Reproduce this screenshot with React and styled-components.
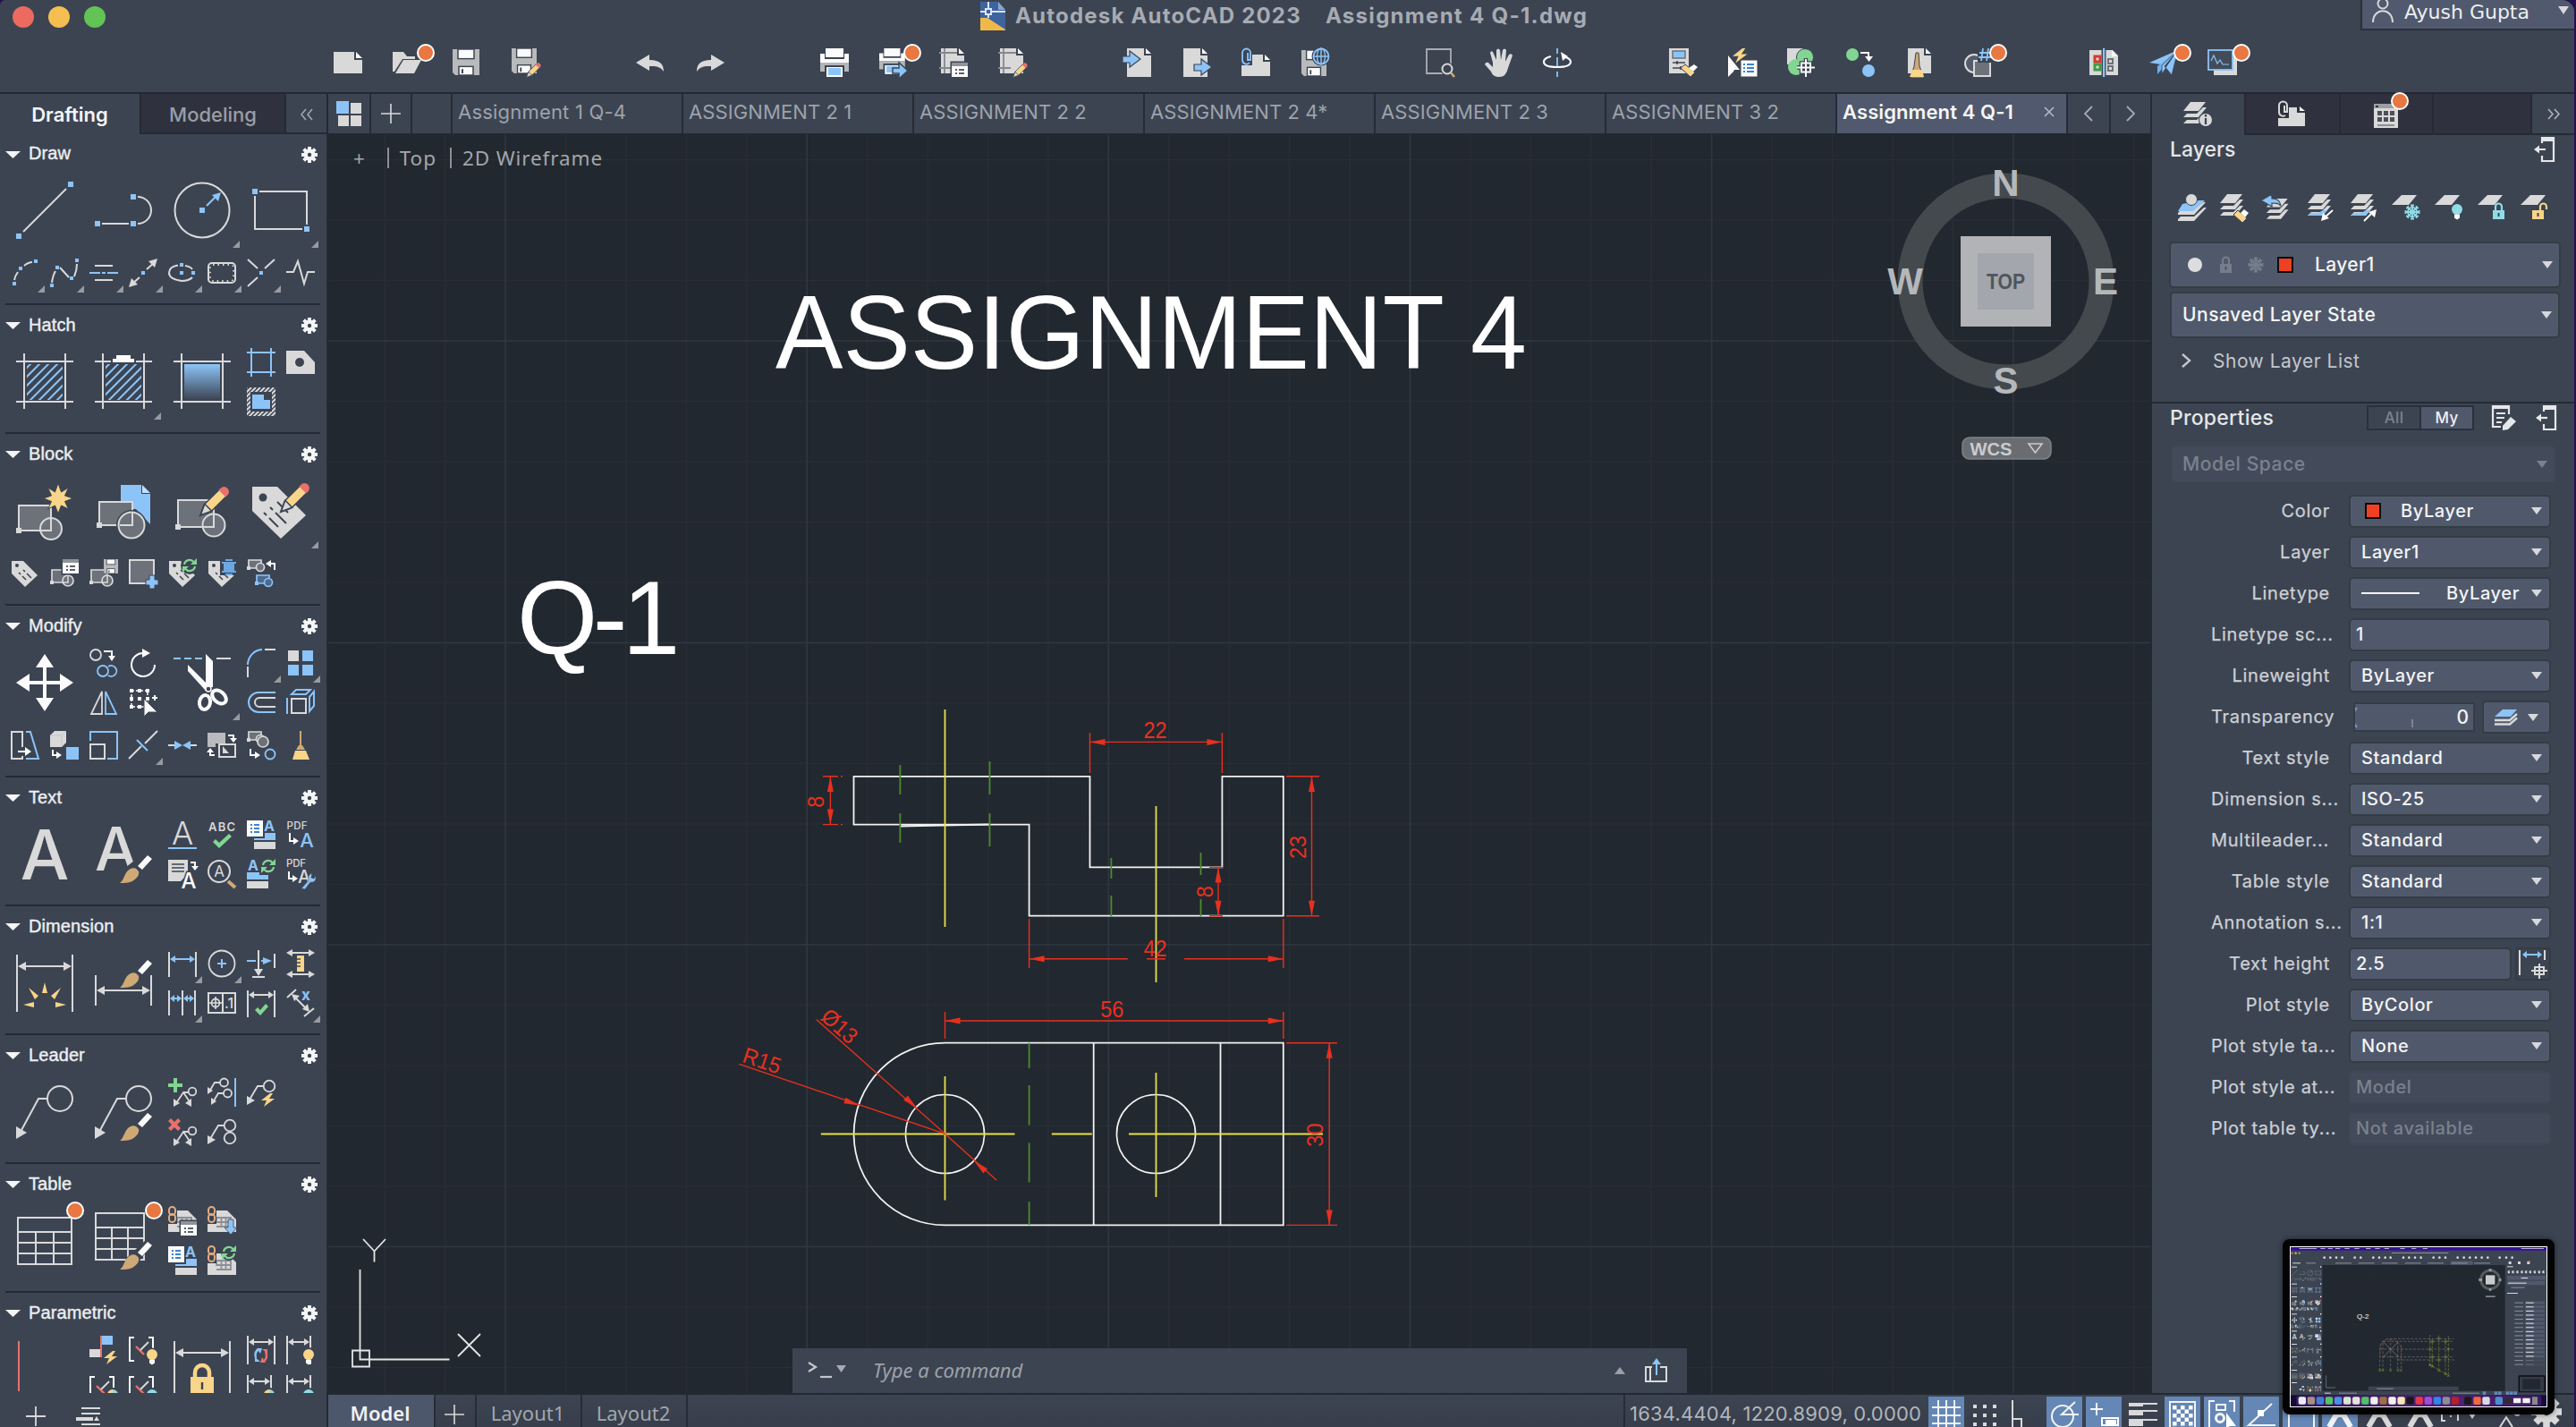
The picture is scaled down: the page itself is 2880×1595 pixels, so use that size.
import React from "react";
import styled, { createGlobalStyle, css } from "styled-components";

const G = "#d9d9d9", B = "#8cc4f8", Y = "#f8d588", R = "#e8716d", N = "#82d692", T = "#8fdce6", M = "#6c717a", W = "#fbfbfb", K = "#3c4452", O = "#e87741", BR = "#cfa975";
const UI = `Inter, "Liberation Sans", sans-serif`;
const HUM = `"Noto Sans", "Open Sans", sans-serif`;
const ART = `"Liberation Sans", Arial, sans-serif`;

const Global = createGlobalStyle`
  html, body { margin: 0; padding: 0; background: #26104f; overflow: hidden; }
  *, *::before, *::after { box-sizing: border-box; }
  svg { display: block; flex: none; overflow: visible; }
`;

/* ---------- shared drawing parts ---------- */
const Sq = ({ x, y, s = 3, c = B }) => <rect x={x - s} y={y - s} width={s * 2} height={s * 2} fill={c} />;
const L = ({ d, c = G, w = 2, f = "none", ...p }) => <path d={d} stroke={c} strokeWidth={w} fill={f} {...p} />;
const P = ({ d, c = G, ...p }) => <path d={d} fill={c} {...p} />;
const Tx = ({ x, y, s, c = G, w = 500, children, ...p }) => <text x={x} y={y} fontSize={s} fill={c} fontWeight={w} fontFamily={UI} textAnchor="middle" {...p}>{children}</text>;
const Pencil = ({ x, y, k = 1 }) => (
  <g transform={`translate(${x} ${y}) scale(${k}) rotate(45)`}>
    <path d="M-5.500 -36h11v26L0 2l-5.500-12z" fill={Y} stroke={K} strokeWidth="1.500" />
    <path d="M-5.500 -33v-3a5.500 5.500 0 0 1 11 0v3z" fill={R} />
    <path d="M-5.500 -11h11L0 1z" fill={G} stroke={K} strokeWidth="1.500" />
  </g>
);
const Brush = ({ x, y }) => (
  <g transform={`translate(${x} ${y})`}>
    <path d="M0 31C5 28 5 18 12 15c4-2 7 0 9 3 1 4-2 8-7 11-5 2-9 2-14 2z" fill={BR} />
    <path d="M20 12L31 0l5 4-11 12z" fill={W} />
  </g>
);
const Doc = ({ x, y, w, h, c = G, n = 7 }) => (
  <g transform={`translate(${x} ${y})`}>
    <path d={`M0 0H${w - n - 1}V${n + 1}H${w}V${h}H0z`} fill={c} />
    <path d={`M${w - n + 1} 0V${n - 1}H${w}z`} fill={W} />
  </g>
);
const Refresh = ({ x, y, r = 6, a = N, b = N, w = 2.2 }) => (
  <g transform={`translate(${x} ${y})`}>
    <path d={`M${-r} -1A${r} ${r} 0 0 1 ${r * 0.8} ${-r * 0.6}`} stroke={a} strokeWidth={w} fill="none" />
    <path d={`M${r} 1A${r} ${r} 0 0 1 ${-r * 0.8} ${r * 0.6}`} stroke={b} strokeWidth={w} fill="none" />
    <path d={`M${r + 2} ${-r - 2}v7h-7z`} fill={a} />
    <path d={`M${-r - 2} ${r + 2}v-7h7z`} fill={b} />
  </g>
);
const Bolt = ({ x, y, k = 1 }) => <path transform={`translate(${x} ${y}) scale(${k})`} d="M10 0L0 8h6l-3 7 12-9H9l4-6z" fill={Y} />;
const Bulb = ({ x, y, c = Y }) => (
  <g transform={`translate(${x} ${y})`}><circle r="6" fill={c} /><path d="M-3 5.500h6v4l-3 2-3-2z" fill={W} /></g>
);
const TagShape = () => (
  <g>
    <path d="M1 2h13l16 16-14 13L1 16z" fill={G} />
    <circle cx="7" cy="7" r="2" fill={K} />
    <path d="M9 15l2 2m2 2l4 4M14 12l2 2m2 2l5 5" stroke={K} strokeWidth="1.600" />
  </g>
);
const MiniBlock = ({ x = 0, y = 0, c = G, f = M }) => (
  <g transform={`translate(${x} ${y})`}>
    <path d="M2 2h18v14H2z" fill={f} stroke={c} strokeWidth="1.700" />
    <circle cx="20" cy="14" r="6" fill={f} stroke={c} strokeWidth="1.700" />
    <path d="M20 8v8h-6" stroke={c} strokeWidth="1.500" fill="none" />
    <rect x="0" y="14" width="4" height="4" fill={c} />
  </g>
);
const SmallBlock = ({ x = 0, y = 0, c = G, f = M }) => (
  <g transform={`translate(${x} ${y})`}>
    <path d="M2 1h14v9H2z" fill={f} stroke={c} strokeWidth="1.700" />
    <circle cx="15" cy="9" r="4.500" fill={f} stroke={c} strokeWidth="1.700" />
    <rect x="0" y="8" width="4" height="4" fill={c} />
  </g>
);
const ListCard = ({ x = 0, y = 0, s = 18 }) => (
  <g transform={`translate(${x} ${y})`}>
    <rect width={s} height={s} fill={W} />
    <path d="M4 5h2m2 0h6M4 9h2m2 0h6M4 13h2m2 0h6" stroke="#3c83c9" strokeWidth="2" />
  </g>
);
const PropCard = ({ x, y }) => (
  <g transform={`translate(${x} ${y})`}>
    <rect x="-1.500" y="-1.500" width="21" height="19" fill={K} />
    <rect width="18" height="16" fill={W} /><rect width="18" height="4" fill="#8f9297" />
    <path d="M4 8h2m2 0h6M4 12h2m2 0h6" stroke="#5b6068" strokeWidth="2" />
  </g>
);
const Floppy = ({ x = 0, y = 0, w = 30, h = 30 }) => (
  <g transform={`translate(${x} ${y}) scale(${w / 30} ${h / 30})`}>
    <path d="M0 0h30v30H3l-3-3z" fill="#b9babc" />
    <rect x="6" y="0" width="18" height="11" fill={W} stroke={K} strokeWidth="1.500" />
    <rect x="7" y="20" width="16" height="10" fill={W} stroke={K} strokeWidth="1.500" />
    <path d="M11 23v5" stroke={K} strokeWidth="2" />
  </g>
);
const AStyle = ({ x = 0, y = 0 }) => (
  <g transform={`translate(${x} ${y})`}>
    <ListCard /><Tx x={25} y={12} s={16} c={B} w={700}>A</Tx>
    <rect x="20" y="14" width="12" height="8" fill={B} /><rect x="8" y="20" width="24" height="2" fill={B} />
    <rect x="8" y="24" width="24" height="8" fill={G} />
  </g>
);
const Printer = () => (
  <g>
    <rect x="6" y="0" width="20" height="10" fill={W} /><path d="M0 6h5v6h22V6h5v10H0z" fill={W} />
    <path d="M0 16h32v10h-5v-7H5v7H0z" fill="#b5b6b9" /><rect x="7" y="21" width="18" height="11" fill={W} /><rect x="9" y="22" width="14" height="8" fill={B} />
  </g>
);
const Sheets = () => <path d="M10 1h17l-8 10H2zM6 14l-4 4h17l9-11h-4l-7 7zM6 21l-4 4h17l9-11h-4l-7 7z" fill={G} />;
const LockShape = ({ x = 0, y = 0, c = T, open }) => (
  <g transform={`translate(${x} ${y})`}>
    <rect y="8" width="13" height="10" fill={c} />
    <path d={open ? "M9 9V4a3.500 3.500 0 0 1 7 0v3" : "M3 9V4a3.500 3.500 0 0 1 7 0v5"} stroke={c} strokeWidth="2.200" fill="none" />
    <path d="M6.500 11v4" stroke={K} strokeWidth="2" />
  </g>
);
const Snow = ({ x = 0, y = 0, c = T, r = 8.5 }) => (
  <g transform={`translate(${x} ${y})`} stroke={c} strokeWidth="1.800" fill="none">
    <circle r={r * 0.6} />
    {[0, 45, 90, 135].map(a => <path key={a} d={`M${-r} 0h${2 * r}M${-r + 1} -2v4M${r - 1} -2v4`} transform={`rotate(${a})`} />)}
  </g>
);
const Frame = () => <L d="M9 0v62M55 0v62M0 9h64M0 54h64" />;
const Hatching = () => (
  <g>
    <clipPath id="hatchClip"><rect x="12" y="12" width="40" height="40" /></clipPath>
    <g clipPath="url(#hatchClip)">{[0, 10, 20, 30, 40, 50, 60, 70].map(i => <path key={i} d={`M${-26 + i} 54l44-44`} stroke={B} strokeWidth="2" />)}</g>
  </g>
);
const Mleader = ({ x = 0, y = 0, r = 5 }) => (
  <g transform={`translate(${x} ${y})`} stroke={G} strokeWidth="1.800" fill="none"><path d="M2 13L8 3h6" /><circle cx={14 + r} cy="3" r={r} /><path d="M0 16v-8l6 4z" fill={G} stroke="none" /></g>
);
const AddLeader = () => (
  <g><L d="M9 28L17 16l8 12M17 16h5" w={1.8} /><circle cx="27" cy="15" r="4.300" stroke={G} strokeWidth="1.800" fill="none" /><P d="M6 32v-9l7 5z" /><P d="M26 32v-9l-7 5z" /></g>
);
const GeoBracket = () => (
  <g><L d="M6 2H1v26h5" c={W} /><L d="M22 2h5v12" c={W} /><L d="M8 12l9 9" c={R} w={2.4} /><L d="M13 16l9-9" /></g>
);
const DimBracket = ({ w = 26 }) => (
  <g><L d={`M1 0v32M${w + 1} 0v32`} /><L d={`M4 7h${w - 6}`} /><P d={`M2 7l6-4v8zM${w} 7l-6-4v8z`} /></g>
);
const Chain = ({ x = 0, y = 0 }) => (
  <g transform={`translate(${x} ${y})`} stroke="#e2ab80" strokeWidth="2" fill="none"><rect x="1" y="0" width="7" height="9" rx="3.500" /><rect x="1" y="8" width="7" height="9" rx="3.500" /></g>
);
const SheetGrid = () => (<g><path d="M0 11h10V4h12l10 10v14H0z" fill={G} /><path d="M10 12h16v5H10zM15.500 12v10M20.500 12v10M10 22h16v-5" stroke="#8c8f94" strokeWidth="1.800" fill="none" /></g>);

/* ---------- palette drawings ---------- */
const ICONS = {
  line: <g><L d="M8 56L56 8" /><Sq x={3} y={61} /><Sq x={61} y={3} /></g>,
  polyline: <g><L d="M8 47h30M48 17a15 15 0 0 1 0 30" /><Sq x={3} y={47} /><Sq x={43} y={47} /><Sq x={43} y={17} /></g>,
  circle: <g><circle cx="32" cy="32" r="30.500" stroke={G} strokeWidth="2" fill="none" /><Sq x={32} y={32} /><L d="M37 27l10-10" c={B} w={2.2} /><P d="M53 12l-3 10-7-7z" c={B} /></g>,
  rect: <g><L d="M8 11h53v37M3 16v37h53" /><Sq x={3} y={11} /><Sq x={61} y={53} /></g>,
  arc: <g><L d="M4 24q1-5 4-9M15 8q5-4 9-4" /><Sq x={4} y={28} s={2} /><Sq x={11} y={11} s={2} /><Sq x={28} y={3} s={2} /></g>,
  spline: <g><L d="M2 27q1-8 4-13M11 10l10 11M27 20q3-7 3-14" /><Sq x={2} y={30} s={2} /><Sq x={8} y={10} s={2} /><Sq x={24} y={22} s={2} /><Sq x={30} y={2} s={2} /></g>,
  mline: <g><L d="M6 8h20M6 24h20" /><L d="M0 16h12m2 0h4m2 0h12" c={B} /></g>,
  xline: <g><L d="M3 29l9-8M20 12l9-8" /><P d="M32 0l-3 10-7-7zM0 32l3-10 7 7z" /><Sq x={16} y={16} s={2} /></g>,
  ellipse: <g><L d="M11 7.500Q1 9 1 16t14 9q8 0 12-4M19 8q6 1 8 4" /><Sq x={15} y={7} s={2} /><Sq x={15} y={16} s={2} /><Sq x={28} y={16} s={2} /></g>,
  cloud: <g><rect x="1" y="5" width="30" height="22" rx="4" stroke={G} strokeWidth="2" fill="none" /><rect x="3" y="7" width="26" height="18" rx="3" stroke={G} strokeWidth="1.800" strokeDasharray="1.500 4" fill="none" /></g>,
  xpoint: <g><L d="M1 1l11 10M20 11L31 1M1 31l11-10" /><Sq x={16} y={16} s={2} /></g>,
  pulse: <L d="M0 15h8l5-12 7 25 4-13h8" />,

  hatch: <g><Frame /><Hatching /></g>,
  hatchPaste: <g><Frame /><rect x="18" y="0" width="28" height="11" fill={K} /><Hatching /><path d="M24 2h16v4h4v4H20V6h4z" fill={W} /></g>,
  gradient: <g><defs><linearGradient id="fade" x1="0" y1="0" x2="0" y2="1"><stop offset="0" stopColor={B} /><stop offset="1" stopColor={K} /></linearGradient></defs><Frame /><rect x="12" y="12" width="40" height="40" fill="url(#fade)" /></g>,
  boundary: <L d="M5 0v32M27 0v32M0 5h32M0 27h32" c={B} />,
  wipeout: <g><P d="M0 3h20l12 13v13H0z" /><circle cx="15" cy="16" r="5" fill={K} /></g>,
  region: <g><clipPath id="rc"><path d="M0 0h32v32H0z" /></clipPath><g clipPath="url(#rc)">{Array.from({ length: 14 }, (_, i) => <path key={i} d={`M${i * 5 - 34} 34L${i * 5} 0`} stroke={G} strokeWidth="2" />)}</g><rect x="4" y="5" width="24" height="22" fill={K} /><path d="M6 8h13v6h7v10H6z" fill={B} /></g>,

  blockNew: <g><path d="M3 26h36v28H3z" fill={M} stroke={G} strokeWidth="2" /><circle cx="39" cy="52" r="12" fill={M} stroke={G} strokeWidth="2" /><L d="M39 40v14H28" /><Sq x={3} y={54} c={G} /><path d="M47 1l3.500 10 8-5-4 9 9 3-9 3.500 4 8.500-8-4-3.500 9-3.500-9-8 4 4-8.500-9-3.500 9-3-4-9 8 5z" fill={Y} stroke={K} strokeWidth="1" /></g>,
  blockInsert: <g><path d="M29 3h23v10h10v34L46 30H29z" fill={B} /><path d="M53 3v9h9z" fill="#c4e0fa" /><path d="M5 22h37v26H5z" fill={M} stroke={G} strokeWidth="2" /><circle cx="41" cy="48" r="17" fill={K} /><circle cx="41" cy="48" r="14.500" fill={M} stroke={G} strokeWidth="2" /><L d="M42 33v15H28" /><Sq x={5} y={48} c={G} /></g>,
  blockEdit: <g><path d="M5 20h40v30H5z" fill={M} stroke={G} strokeWidth="2" /><circle cx="45" cy="48" r="12.500" fill={M} stroke={G} strokeWidth="2" /><L d="M45 36v14H33" /><Sq x={5} y={50} c={G} /><Pencil x={31} y={36} /></g>,
  tagEdit: <g><P d="M0 5h28l32 32-28 26L0 32z" /><circle cx="12" cy="17" r="4.500" fill={K} /><L d="M13 34l3 3m3 3l10 10M20 28l3 3m3 3l12 12M28 22l12 12" c={K} /><Pencil x={33} y={32} /></g>,
  tag: <TagShape />,
  blockProps: <g><MiniBlock y={10} /><PropCard x={14} y={0} /></g>,
  blockSave: <g><MiniBlock y={10} /><Floppy x={16} y={0} w={16} h={16} /></g>,
  rectPlus: <g><path d="M1 1h27v26H1z" fill={M} stroke={G} strokeWidth="2" /><path d="M23 18h6v5h4v6h-4v4h-6v-4h-4v-6h4z" fill={B} stroke={K} strokeWidth="1" /></g>,
  tagSync: <g><TagShape /><circle cx="24" cy="7" r="10" fill={K} /><Refresh x={24} y={7} /></g>,
  tagAttr: <g><TagShape /><rect x="14" y="0" width="18" height="18" fill={K} /><rect x="18" y="3" width="12" height="12" fill="#6ea8e0" /><path d="M16 4h2m12 0h2M16 14h2m12 0h2M20 1h8M20 17h8" stroke="#6ea8e0" strokeWidth="2" /></g>,
  blockSwap: <g><SmallBlock y={0} /><L d="M31 12V5h-5" c={W} /><P d="M21 5l6-4v8z" c={W} /><SmallBlock x={9} y={17} c={B} f="#4d6a8c" /></g>,

  move: <path d="M32 0l10 15h-8v15h15v-8l15 10-15 10v-8H34v15h8L32 64 22 49h8V34H15v8L0 32l15-10v8h15V15h-8z" fill={W} />,
  copy: <g><circle cx="7" cy="7" r="6" stroke={G} strokeWidth="1.800" fill="none" /><L d="M16 3h9v7" c={W} /><P d="M21 8h8l-4 6z" c={W} /><circle cx="15" cy="25" r="6" stroke={B} strokeWidth="1.800" fill="none" /><L d="M21 20a6 6 0 1 1 0 10" c={B} w={1.8} /></g>,
  rotate: <g><L d="M17 5a13 13 0 1 0 12 13" c={W} /><P d="M15 0v10l9-5z" c={W} /></g>,
  mirror: <g><L d="M14 4v25H2z" w={1.8} /><L d="M18 4v25h12z" c={B} w={1.8} /></g>,
  select: <g><rect x="3" y="3" width="18" height="18" stroke={W} strokeWidth="1.500" strokeDasharray="3 2" fill="none" />{[3, 12, 21].flatMap(a => [3, 12, 21].map(b => <Sq key={a + "-" + b} x={a} y={b} s={2} c={W} />))}<path d="M17 12v20l5-5h10z" fill={W} stroke={K} strokeWidth="1" /><L d="M29 8v6M26 11h6" c={W} /></g>,
  trim: <g><L d="M0 5h8m4 0h8m4 0h8" c={B} /><L d="M48 5h16" /><path d="M36 0l8 8v29h-8z" fill={W} /><path d="M16 12l24 24-4 5-20-22z" fill={W} /><ellipse cx="35" cy="54" rx="6" ry="8" stroke={W} strokeWidth="4" fill="none" transform="rotate(10 35 54)" /><ellipse cx="51" cy="48" rx="6" ry="9" stroke={W} strokeWidth="4" fill="none" transform="rotate(-48 51 48)" /><circle cx="39" cy="39" r="3" fill={K} stroke={W} strokeWidth="1.500" /></g>,
  fillet: <g><L d="M1 18A17 17 0 0 1 17 1" c={B} /><L d="M20 1h12M1 20v12" /></g>,
  array: <g><rect x="2" y="2" width="12" height="12" fill={G} /><rect x="18" y="2" width="12" height="12" fill={B} /><rect x="2" y="18" width="12" height="12" fill={B} /><rect x="18" y="18" width="12" height="12" fill={B} /></g>,
  offset: <g><L d="M32 5H13a11 11 0 0 0 0 22h19" c={B} /><L d="M32 11H14a5 5 0 0 0 0 10h18" /></g>,
  box: <g><path d="M6 12h16v16H6z" stroke={G} strokeWidth="2" fill="none" /><L d="M1 11v18M6 7l5-5h16l-5 5zM26 10l5-6v16l-5 6z" c={B} /></g>,
  stretch: <g><path d="M1 1h12v30H1z" stroke={G} strokeWidth="2" fill="none" /><L d="M17 1h5l9 30H17" c={B} /><rect x="11" y="18" width="8" height="10" fill={K} /><L d="M8 23h10" c={W} /><P d="M16 18v10l7-5z" c={W} /></g>,
  flatten: <g><P d="M0 5l5-5h13v13l-5 5H0z" /><L d="M0 5h13l5-5M13 5v13" c="#c0c1c4" w={0.8} /><rect x="18" y="18" width="14" height="14" fill={B} /><L d="M3 21v6h5" c={W} /><P d="M7 23v8l6-4z" c={W} /></g>,
  scale: <g><path d="M1 15h16v16H1z" stroke={G} strokeWidth="2" fill="none" /><L d="M1 11V1h30v30H20" c={B} /></g>,
  breakAt: <g><L d="M0 31L14 17M18 14L32 0" /><L d="M9 10l12 12" c={B} /></g>,
  join: <g><L d="M0 16h8M24 16h8" /><P d="M7 11l9 5-9 5zM25 11l-9 5 9 5z" c={B} /></g>,
  draworder: <g><P d="M0 2h20v12H9v4H0z" c="#b9babd" /><path d="M13 15h18v14H13z" stroke={G} strokeWidth="2" fill="none" /><P d="M17 17l7 8h-7z" /><L d="M23 5h6v4M8 27H3v-4" c={W} /><P d="M25 8h8l-4 5zM-1 24h8l-4-5z" c={W} /></g>,
  explode: <g><SmallBlock y={0} x={0} /><circle cx="18" cy="12" r="6" fill={M} stroke={G} strokeWidth="1.700" /><circle cx="26" cy="26" r="5.500" stroke={B} strokeWidth="1.800" fill="none" /><L d="M4 20v7h6" c={W} /><P d="M9 23v8l6-4z" c={W} /></g>,
  broom: <g><L d="M16 0v18" c={BR} /><P d="M14 16h4l3 5H11z" c={BR} /><P d="M10 22h12l4 10H7z" c={Y} /></g>,

  mtext: <Tx x={32} y={60} s={77} w={500}>A</Tx>,
  textStyle: <g><Tx x={24} y={50} s={68} w={500}>A</Tx><path d="M30 50L58 28l8 4-34 26z" fill={K} /><Brush x={28} y={33} /></g>,
  stext: <g><Tx x={16} y={27} s={36} w={300}>A</Tx><rect x="0" y="30" width="32" height="2" fill={B} /></g>,
  spell: <g><Tx x={16} y={12} s={13} w={600} textLength="30">ABC</Tx><path d="M6 24l3-3 4 4L24 15l3 3-14 13z" fill={N} /></g>,
  astyle: <AStyle />,
  pdfA: <g><Tx x={12} y={10} s={11.5} w={500} textLength="23">PDF</Tx><L d="M4 14v9h6" c={W} /><P d="M8 19v8l6-4z" c={W} /><Tx x={23} y={30} s={22} c={B} w={500}>A</Tx></g>,
  textBlock: <g><P d="M0 0h22v16l-8 8H0z" /><L d="M4 5h14M4 9h14M4 13h14" c={K} w={1.6} /><L d="M25 3h5v5" c={W} /><P d="M26 7h8l-4 5z" c={W} /><Tx x={23} y={32} s={24} w={500} stroke={K} strokeWidth="3" paintOrder="stroke" c={W}>A</Tx></g>,
  findText: <g><circle cx="13" cy="13" r="12" stroke={G} strokeWidth="2" fill="none" /><Tx x={13} y={19} s={17} w={400}>A</Tx><L d="M23 24l8 7" c={BR} w={4} /></g>,
  scaleText: <g><Tx x={7} y={12} s={16} c={B} w={700}>A</Tx><path d="M0 14h14v3h10v5H0z" fill={B} /><rect y="24" width="24" height="8" fill={G} /><Refresh x={24} y={7} r={6} /></g>,
  pdfFix: <g><Tx x={11} y={8} s={11.5} w={500} textLength="22">PDF</Tx><L d="M3 13v8h5" c={W} /><P d="M7 17v8l6-4z" c={W} /><Tx x={20} y={26} s={20} w={500}>A</Tx><path d="M17 32l8-9c-1-5 1-7 4-8l-1 5 3 1 2-3c1 5-2 8-6 7l-6 8z" fill={B} stroke={K} strokeWidth=".6" /></g>,

  dim: <g><L d="M1 0v64M63 0v64M6 13h52" /><P d="M2 13l9-5v10zM62 13l-9-5v10z" /><path d="M32 31l3 12h-6zM14 37l11 9-4 4zM50 37L39 46l4 4zM8 56l12-3v6zM56 56l-12-3v6z" fill={Y} /></g>,
  dimStyle: <g><L d="M1 23v34M63 23v34M6 40h52" /><P d="M2 40l9-5v10zM62 40l-9-5v10z" /><Brush x={28} y={6} /></g>,
  dimLin: <g><L d="M1 3v28M31 3v28" /><L d="M5 11h22" c={B} /><P d="M2 11l6-4v8zM30 11l-6-4v8z" c={B} /></g>,
  dimCenter: <g><circle cx="16" cy="16" r="14.500" stroke={G} strokeWidth="1.800" fill="none" /><L d="M16 11v10M11 16h10" c={B} /></g>,
  dimSpace: <g><L d="M0 13h10" c={B} /><L d="M16 13h4" c={B} /><P d="M18 9v8l10-4z" c={B} /><L d="M31 5v16M13 1v22M6 31h14" /><P d="M8 22h10l-5 8z" /></g>,
  dimRuler: <g><L d="M4 4h24M4 28h24" /><P d="M0 4l7-4v8zM32 4l-7-4v8zM0 28l7-4v8zM32 28l-7-4v8z" /><rect x="12" y="7" width="8" height="18" fill={Y} /><L d="M12 11h4M12 15h4M12 19h4" c={K} w={1.4} /></g>,
  dimCont: <g><L d="M1 2v28M16 2v28M30 2v28" /><L d="M4 11h10M18 11h10" c={B} /><P d="M2 11l5-4v8zM15 11l-5-4v8zM17 11l5-4v8zM29 11l-5-4v8z" c={B} /></g>,
  tolerance: <g><rect x="1" y="5" width="30" height="22" stroke={G} strokeWidth="2" fill="none" /><L d="M17 5v22" /><circle cx="9" cy="16" r="4.500" stroke={G} strokeWidth="1.800" fill="none" /><L d="M9 9v14M2 16h14" w={1.6} /><Tx x={24} y={22} s={16} w={500}>.1</Tx></g>,
  dimCheck: <g><L d="M1 2v30M31 2v30M5 7h22" /><P d="M2 7l6-4v8zM30 7l-6-4v8z" /><path d="M9 24l3-3 3 3 6-7 3 3-9 10z" fill={N} /></g>,
  dimJog: <g><L d="M1 10L11 1M20 31l11-9M9 9l14 14" /><P d="M6 6l9 2-6 6zM26 26l-2-9-6 6z" /><Tx x={22} y={13} s={17} c={B} w={700}>x</Tx></g>,

  leader: <g><L d="M5 54L25 17h9" /><circle cx="49" cy="17" r="14" stroke={G} strokeWidth="2" fill="none" /><P d="M0 62V48l12 7z" /></g>,
  leaderStyle: <g><L d="M5 54L25 17h9" /><circle cx="49" cy="17" r="14" stroke={G} strokeWidth="2" fill="none" /><P d="M0 62V48l12 7z" /><Brush x={28} y={33} /></g>,
  leaderAdd: <g><AddLeader /><path d="M6 0h4v6h6v4h-6v6H6v-6H0V6h6z" fill={N} /></g>,
  leaderAlign: <g><Mleader x={0} y={2} r={4.5} /><Mleader x={4} y={14} r={4.5} /><rect x="30" y="0" width="2" height="32" fill={B} /></g>,
  leaderBolt: <g><L d="M3 24L12 9h6" w={1.8} /><circle cx="25" cy="9" r="6.300" stroke={G} strokeWidth="1.800" fill="none" /><P d="M0 30V20l9 5z" /><Bolt x={16} y={17} /></g>,
  leaderDel: <g><AddLeader /><path d="M0 4l3-3 4 4 4-4 3 3-4 4 4 4-3 3-4-4-4 4-3-3 4-4z" fill={R} /></g>,
  leaderMerge: <g><L d="M3 24L12 9h6" w={1.8} /><circle cx="25" cy="9" r="6.300" stroke={G} strokeWidth="1.800" fill="none" /><circle cx="25" cy="23" r="6.300" stroke={G} strokeWidth="1.800" fill="none" /><P d="M0 30V20l9 5z" /></g>,

  table: <g><path d="M2 6h60v52H2zM2 22h60M2 34h60M2 46h60M22 22v36M42 22v36" stroke={G} strokeWidth="2" fill="none" /></g>,
  tableStyle: <g><path d="M1 1h54v52H1zM1 17h54M1 29h54M1 41h54M19 17v36M37 17v36" stroke={G} strokeWidth="2" fill="none" /><path d="M34 52L56 32l8 4-20 26z" fill={K} /><Brush x={28} y={33} /></g>,
  linkProps: <g><SheetGrid /><rect x="-1" y="-1" width="11" height="20" fill={K} /><Chain /><PropCard x={14} y={16} /></g>,
  linkDown: <g><SheetGrid /><rect x="-1" y="-1" width="11" height="20" fill={K} /><Chain /><path d="M23 14h6v9h4l-7 8-7-8h4z" fill={B} stroke={K} strokeWidth=".8" /></g>,
  linkSync: <g><g transform="translate(0 4)"><SheetGrid /></g><rect x="-1" y="-1" width="11" height="20" fill={K} /><circle cx="24" cy="7" r="9" fill={K} /><Chain /><Refresh x={24} y={7} /></g>,

  redLine: <L d="M3 0v56" c={R} />,
  autoConstrain: <g><P d="M0 15h12v9H0z" /><P d="M14 0h12v10H14z" c={B} /><L d="M13 0v24" c={R} /><Bolt x={16} y={17} /></g>,
  geoShow: <g><GeoBracket /><circle cx="26" cy="21" r="7.500" fill={K} /><Bulb x={26} y={21} /></g>,
  geoMix: <g><GeoBracket /><circle cx="26" cy="22" r="8" fill={K} /><path d="M20 22a6 6 0 0 1 6-6v6z" fill={Y} /><path d="M26 16a6 6 0 0 1 6 6h-6z" fill={T} /></g>,
  geoHide: <g><GeoBracket /><circle cx="26" cy="22" r="8" fill={K} /><Bulb x={26} y={22} c={T} /></g>,
  dimLock: <g><L d="M1 0v64M63 0v64M6 13h52" /><P d="M2 13l9-5v10zM62 13l-9-5v10z" /><path d="M19 40h26v24H19z" fill={Y} /><path d="M24 42v-7a8 8 0 0 1 16 0v7" stroke={Y} strokeWidth="4.500" fill="none" /><L d="M32 46v8" c={K} w={2.4} /></g>,
  dimConv: <g><DimBracket w={30} /><L d="M14 15q-6 2-4 10" c={B} w={2.4} /><L d="M18 29q6-3 3-12" c={R} w={2.4} /><P d="M11 14h6l-2 6zM9 24l6 5h-6z" c={B} /><P d="M21 30h-6l2-6zM23 20l-6-5h6z" c={R} /></g>,
  dimShow: <g><DimBracket /><circle cx="25" cy="21" r="8" fill={K} /><Bulb x={25} y={21} /></g>,
  dimMix: <g><DimBracket /><circle cx="25" cy="22" r="8" fill={K} /><path d="M19 22a6 6 0 0 1 6-6v6z" fill={Y} /><path d="M25 16a6 6 0 0 1 6 6h-6z" fill={T} /></g>,
  dimHide: <g><DimBracket /><circle cx="25" cy="22" r="8" fill={K} /><Bulb x={25} y={22} c={T} /></g>,

  /* toolbar */
  new: <Doc x={0} y={4} w={32} h={24} n={8} />,
  open: <g><P d="M0 4h12l4 5h9v3H11L2 26H0z" /><P d="M12 13h20l-8 15H3z" /></g>,
  save: <Floppy x={1} y={1} w={30} h={29} />,
  saveAs: <g><Floppy x={0} y={0} w={28} h={28} /><Pencil x={17} y={32} k={0.5} /></g>,
  undo: <P d="M0 16L15 7v6c12 0 16 5 16 13-4-6-9-6-16-6v5z" />,
  redo: <P d="M32 16L17 7v6C5 13 1 18 1 26c4-6 9-6 16-6v5z" />,
  print: <Printer />,
  batch: <g><g transform="scale(.9)"><Printer /></g><path d="M15 22h7v-6l10 9-10 9v-6h-7z" fill={B} stroke={K} strokeWidth="1.500" /></g>,
  pageSetup: <g><Doc x={2} y={0} w={26} h={28} /><L d="M0 5h20M6 0v28M0 22h14" c="#85898f" w={1.8} /><PropCard x={14} y={16} /></g>,
  pageEdit: <g><Doc x={2} y={0} w={26} h={28} /><L d="M0 5h20M6 0v28M0 22h14" c="#85898f" w={1.8} /><Pencil x={17} y={32} k={0.5} /></g>,
  import: <g><Doc x={5} y={0} w={27} h={32} /><path d="M0 9h8V3l12 9-12 9v-5H0z" fill={B} stroke={K} strokeWidth="1.200" /></g>,
  export: <g><Doc x={1} y={0} w={27} h={32} /><path d="M13 18h8v-6l12 9-12 9v-5h-8z" fill={B} stroke={K} strokeWidth="1.200" /></g>,
  attach: <g><Doc x={0} y={7} w={32} h={24} /><rect x="-1" y="0" width="13" height="19" fill={K} /><L d="M7 5v8h3V5a4.500 4.500 0 0 0-9 0v8a4.500 4.500 0 0 0 8 3" c={B} w={1.8} /></g>,
  web: <g><Floppy x={1} y={2} w={28} h={29} /><circle cx="23" cy="9" r="10.500" fill={K} /><circle cx="23" cy="9" r="8.500" stroke={B} strokeWidth="1.800" fill="none" /><L d="M23 0v18M14 9h18" c={B} w={1.5} /><ellipse cx="23" cy="9" rx="4.500" ry="9" stroke={B} strokeWidth="1.300" fill="none" /></g>,
  zoomWin: <g><path d="M1 1h27v27H1z" stroke="#a9adb3" strokeWidth="1.800" fill="none" /><circle cx="24" cy="23" r="7.500" fill={K} /><circle cx="24" cy="23" r="5.500" stroke={G} strokeWidth="2" fill="none" /><L d="M28 27l4 5" c={BR} w={2.6} /></g>,
  pan: <P d="M9 16L6 5q1-3 3-1l4 9V2q2-3 4 0l1 11 2-11q2-3 4 0l-1 13 4-8q3-2 4 1l-5 14q-2 10-10 10-7 0-9-6L0 18q1-3 4-2l5 5z" />,
  orbit: <g><L d="M15 0v6m0 4v12m0 4v6" c={B} w={1.8} /><L d="M21 9q9 2 9 6 0 6-15 6T0 15q0-4 8-6" c={W} w={2.2} /><P d="M19 4l8 5-6 5z" c={W} /></g>,
  props: <g><path d="M0 0h22v28H0z" fill={G} /><rect x="4" y="3" width="14" height="8" fill={B} stroke={M} strokeWidth="1.500" /><L d="M4 16h14M4 22h10M9 14v4M13 20v4" c={K} w={1.6} /><path d="M13 22l5-4 11 9-5 5z" fill={Y} stroke={K} /><path d="M22 22l6-4 4 3-5 5z" fill={W} /></g>,
  quick: <g><P d="M0 8l13 16H7l-1 2-6 6z" c={W} /><Bolt x={5} y={0} k={1.1} /><rect x="14" y="13" width="19" height="19" fill={W} stroke={K} /><path d="M17 18h2m2 0h8M17 22h2m2 0h8M17 26h2m2 0h8" stroke="#3c83c9" strokeWidth="2" /></g>,
  count: <g><path d="M0 0h18v18H0z" fill={G} /><circle cx="20" cy="10" r="9.500" fill={N} stroke={K} /><circle cx="10" cy="21" r="9" fill={N} /><path d="M21 11v22M11 21.500h21M16 16.500h10v10H16z" stroke={K} strokeWidth="4.500" fill="none" /><path d="M21 12v20M11 21.500h20M16 16.500h10v10H16z" stroke={W} strokeWidth="2" fill="none" /></g>,
  convert: <g><circle cx="7" cy="7" r="7" fill={N} /><circle cx="25" cy="25" r="7" fill={B} /><L d="M16 5h9v6" c={W} /><P d="M21 9h9l-4.500 6z" c={W} /></g>,
  purge: <g><Doc x={2} y={0} w={26} h={28} /><path d="M5 33l4-13 2-15h3l1 15 5 13z" fill={BR} stroke={K} /><path d="M7 24h11l2 8H4z" fill={Y} /></g>,
  geo: <g><circle cx="10" cy="17" r="10" fill="#555c69" stroke={G} strokeWidth="2" /><rect x="10" y="14" width="18" height="17" fill="#6c717a" stroke={G} strokeWidth="2" /><rect x="14" y="-2" width="16" height="18" fill={K} /><L d="M20 0l-2 14M26 0l-2 14M16 5h14M15 10h14" c={B} w={1.8} /></g>,
  compare: <g><rect x="0" y="2" width="32" height="28" fill={G} /><P d="M24 0h9v9z" c={K} /><P d="M25 2l6 7h-6z" c={W} /><rect x="13.500" y="0" width="5" height="32" fill={K} /><rect x="15" y="0" width="2.200" height="32" fill={B} /><rect x="6" y="9" width="6" height="6" stroke="#d6382f" strokeWidth="3" fill="none" /><rect x="6" y="18" width="6" height="6" stroke="#3f9a45" strokeWidth="3" fill="none" /><path d="M21 12h5v5h-5zM21 20h5v5h-5z" stroke={M} strokeWidth="2" fill="none" /></g>,
  share: <g><path d="M0 16L32 2 13 18z" fill={B} /><path d="M32 2L9 29v-9z" fill="#6fb0ef" /><path d="M32 2L14 19l0 9M32 2l-7 28-8-10z" fill={B} stroke={K} strokeWidth=".8" /></g>,
  activity: <g><rect x="6" y="10" width="26" height="20" fill={G} /><rect x="0" y="2" width="27" height="22" fill="#434c5a" stroke={B} strokeWidth="1.800" /><L d="M3 14l3-6 4 9 3-4 3 5h7" c={B} w={1.2} /></g>,

  /* layer tools */
  lyState: <g><path d="M6 12l-5 8h18l12-12h-7z" fill={B} /><path d="M1 22l2-2h15l11-10h3L19 24H1zM1 29l3-3h15l11-10h3L19 31H1z" fill={G} /><circle cx="16" cy="7" r="6.500" fill={G} stroke={K} /></g>,
  lyMatch: <g><g transform="translate(-2 0)"><Sheets /></g><path d="M15 24l5-5 10 9-5 5z" fill={Y} stroke={K} /><path d="M23 22l4-4 5 4-4 5z" fill={W} /></g>,
  lyPrev: <g><g transform="translate(2 5) scale(.95)"><Sheets /></g><path d="M-2 8L10 1v5c7 0 9 3 10 8-3-3-5-3-10-3v4z" fill={B} stroke={K} strokeWidth="1.200" /></g>,
  lyCurrent: <g><Sheets /><P d="M2 25h16l6-6h-5l-5 3H6z" c={B} /><L d="M30 18L21 27" c={K} w={5} /><L d="M30 19l-9 8" c={W} /><P d="M17 31l2-9 7 6z" c={W} /></g>,
  lyMove: <g><Sheets /><P d="M2 25h16l6-6h-5l-5 3H6z" c={B} /><L d="M17 31l10-10" c={W} /><P d="M31 18l-2 9-7-6z" c={W} /></g>,
  lyFreeze: <g><P d="M11 2h17l-9 11H0z" /><Snow x={23} y={21} /></g>,
  lyOff: <g><P d="M11 2h17l-9 11H0z" /><circle cx="25" cy="18" r="7.500" fill={K} /><Bulb x={25} y={18} c={T} /></g>,
  lyLock: <g><P d="M11 2h17l-9 11H0z" /><LockShape x={17} y={11} /></g>,
  lyUnlock: <g><P d="M11 2h17l-9 11H0z" /><LockShape x={13} y={11} c={Y} open /></g>,
};
const Icon = ({ n, s = 32 }) => <svg width={s} height={s} viewBox={`0 0 ${s} ${s}`}>{ICONS[n]}</svg>;

/* ---------- frame ---------- */
const Window = styled.div`
  width: 2878px; height: 1595px; display: flex; flex-direction: column; overflow: hidden;
  background: ${K}; font-family: ${UI}; color: #e6e7e9; border-radius: 6px 14px 0 0; position: relative;
`;
const Header = styled.header`height: 105px; flex: none; border-bottom: 2px solid #232932; display: flex; flex-direction: column;`;
const TitleBar = styled.div`height: 37px; display: grid; grid-template-columns: 1096px 1fr 239px;`;
const Lights = styled.div`display: flex; gap: 16px; padding: 7px 0 0 14px;`;
const Light = styled.i`width: 24px; height: 24px; border-radius: 50%; background: ${p => p.$c};`;
const Title = styled.div`
  display: flex; align-items: center; height: 35px; font-weight: 700; font-size: 24px; color: #a7abb2; white-space: pre;
  span + span { margin-left: 27px; } svg { margin-right: 11px; }
`;
const TitleText = styled.span`letter-spacing: ${p => p.$ls}px;`;
const User = styled.div`
  height: 34px; background: #50596d; border: solid #2a303b; border-width: 0 0 2px 2px; display: flex; align-items: center;
  padding: 0 6px 5px 11px; font-family: "DejaVu Sans", ${HUM}; font-size: 22px; line-height: 26px; color: #eceef0;
  svg { margin-top: -4px; } svg:first-child { margin-right: 12px; } span { flex: 1; }
`;
const Toolbar = styled.div`display: flex; gap: 73.5px; padding-left: 356px; height: 66px;`;
const ToolGroup = styled.div`display: flex;`;
const ToolBtn = styled.div`width: 66.2px; height: 66px; display: flex; align-items: center; justify-content: center; position: relative;`;
const Badge = styled.i`
  position: absolute; width: 20px; height: 20px; border-radius: 50%; background: ${O}; border: 2px solid #fff;
  left: ${p => p.$x}px; top: ${p => p.$y}px;
`;
const Body = styled.div`flex: 1; display: flex; min-height: 0;`;

/* ---------- left palette ---------- */
const Left = styled.aside`width: 367px; flex: none; border-right: 2px solid #232a31; display: flex; flex-direction: column;`;
const LeftTabs = styled.div`display: flex; height: 45px; flex: none;`;
const LeftTab = styled.div`
  display: flex; align-items: center; justify-content: center; width: ${p => p.$w}px; padding-top: ${p => (p.$on ? 1 : 2)}px;
  font-size: 22px; font-weight: ${p => (p.$on ? 600 : 500)}; color: ${p => (p.$on ? "#f4f5f6" : "#9a9ea5")};
  ${p => p.$dark && css`background: #2f323e; border: 2px solid #252a34; border-top: 0;`}
  ${p => p.$edge && css`border-bottom: 2px solid #252a34;`}
`;
const Palette = styled.div`flex: 1; min-height: 0; overflow: hidden; padding: 0 7px 0 6px;`;
const Section = styled.section`
  padding-bottom: 12px; border-top: ${p => (p.$first ? "0" : "2px solid #242a35")};
`;
const SectionHead = styled.div`
  height: ${p => (p.$first ? 41 : 42)}px; display: flex; align-items: center; padding-top: 4px;
  font-family: ${ART}; font-size: 20px; color: #eceef0; -webkit-text-stroke: .4px #eceef0;
  span { margin-top: -2px; letter-spacing: .1px; }
  svg:first-child { margin-right: 9px; } svg:last-child { margin-right: 3px; margin-left: auto; }
`;
const IconGrid = styled.div`
  display: grid; grid-template-columns: repeat(8, 44px); grid-auto-rows: 44px; grid-auto-flow: row dense;
  & + & { margin-top: 4px; }
`;
const Cell = styled.div`
  display: flex; align-items: center; justify-content: center; position: relative;
  ${p => p.$big && css`grid-column: span 2; grid-row: span 2;`}
  &::after {
    content: ""; position: absolute; right: ${p => (p.$big ? 2 : 0)}px; bottom: ${p => (p.$big ? 2 : 0)}px;
    border-left: 8px solid transparent; border-bottom: 8px solid #989b9f; display: ${p => (p.$more ? "block" : "none")};
  }
`;
const PaletteFoot = styled.div`height: 38px; flex: none; display: flex; gap: 34px; padding: 15px 0 0 29px;`;

const SECTIONS = [
  ["Draw", "L:line L:polyline L:circle> L:rect>", "arc> spline> mline> xline> ellipse> cloud> xpoint> pulse"],
  ["Hatch", "L:hatch L:hatchPaste> L:gradient boundary wipeout region"],
  ["Block", "L:blockNew L:blockInsert L:blockEdit L:tagEdit>", "tag blockProps blockSave rectPlus tagSync tagAttr blockSwap"],
  ["Modify", "L:move copy rotate L:trim> fillet> array> mirror select offset box", "stretch flatten scale breakAt> join draworder explode broom"],
  ["Text", "L:mtext L:textStyle stext spell astyle pdfA textBlock findText scaleText pdfFix"],
  ["Dimension", "L:dim L:dimStyle dimLin> dimCenter> dimSpace dimRuler dimCont> tolerance dimCheck dimJog>"],
  ["Leader", "L:leader L:leaderStyle leaderAdd leaderAlign leaderBolt - leaderDel leaderMerge"],
  ["Table", "L:table* L:tableStyle* linkProps linkDown - - astyle linkSync"],
  ["Parametric", "L:redLine autoConstrain geoShow L:dimLock dimConv dimShow geoMix geoHide dimMix dimHide"],
];
const Gear = ({ s = 18, c = "#f4f5f6", bg = K }) => (
  <svg width={s} height={s} viewBox="-9 -9 18 18">
    {[0, 45, 90, 135].map(a => <rect key={a} x="-2" y="-9" width="4" height="18" fill={c} transform={`rotate(${a})`} />)}
    <circle r="6.500" fill={c} /><circle r="2.200" fill={bg} />
  </svg>
);
const Caret = ({ w = 12, h = 8, c = "#d6d8db", up }) => <svg width={w} height={h} viewBox="0 0 12 8" preserveAspectRatio="none"><path d={up ? "M0 8h12L6 0z" : "M0 0h12L6 8z"} fill={c} /></svg>;

function PaletteCell({ spec }) {
  if (spec === "-") return <Cell />;
  const big = spec.startsWith("L:");
  const name = spec.replace("L:", "").replace(/[>*]/g, "");
  return (
    <Cell $big={big} $more={spec.endsWith(">")}>
      <Icon n={name} s={big ? 64 : 32} />
      {spec.endsWith("*") && <Badge $x={68} $y={0} />}
    </Cell>
  );
}
function LeftPanel() {
  return (
    <Left>
      <LeftTabs>
        <LeftTab $w={156} $on>Drafting</LeftTab>
        <LeftTab $w={164} $dark>Modeling</LeftTab>
        <LeftTab $w={45} $edge><svg width="14" height="12" viewBox="0 0 14 12"><path d="M6 0L1 6l5 6M13 0L8 6l5 6" stroke="#a5a9b0" strokeWidth="1.500" fill="none" /></svg></LeftTab>
      </LeftTabs>
      <Palette>
        {SECTIONS.map(([title, ...rows], i) => (
          <Section key={title} $first={!i}>
            <SectionHead $first={!i}><Caret w={17} h={8} c="#f4f5f6" /><span>{title}</span><Gear /></SectionHead>
            {rows.map(r => <IconGrid key={r}>{r.split(" ").map((s, k) => <PaletteCell key={k} spec={s} />)}</IconGrid>)}
          </Section>
        ))}
      </Palette>
      <PaletteFoot>
        <svg width="22" height="22" viewBox="0 0 22 22"><path d="M11 0v22M0 11h22" stroke={G} strokeWidth="1.800" /></svg>
        <svg width="27" height="22" viewBox="0 0 27 22"><path d="M6 2h21M6 8h21M6 20h21" stroke={G} strokeWidth="2" /><path d="M0 14h19" stroke={G} strokeWidth="4" /><path d="M20 16h6l-3-5z" fill={G} /></svg>
      </PaletteFoot>
    </Left>
  );
}

/* ---------- document area ---------- */
const Main = styled.main`flex: 1; display: flex; flex-direction: column; min-width: 0;`;
const Upper = styled.div`flex: 1; display: flex; min-height: 0; border-bottom: 2px solid #232932;`;
const Center = styled.div`width: 2039px; display: flex; flex-direction: column; border-right: 2px solid #232932;`;
const FileTabs = styled.div`height: 45px; flex: none; display: flex; border-bottom: 1px solid #232932;`;
const FileTab = styled.div`
  width: ${p => p.$w || 258}px; flex: none; border-right: 2px solid #262c36; display: flex; align-items: center; justify-content: space-between;
  padding: 0 13px 4px 6px; font-size: 22px; letter-spacing: ${p => p.$ls ?? 0}px; color: #9da2aa; white-space: pre;
  ${p => p.$on && css`background: #50596d; color: #f4f5f6; font-weight: 600;`}
  ${p => p.$icon && css`justify-content: center; padding: 0;`}
`;
const Canvas = styled.div`flex: 1; min-height: 0; position: relative; background: #22282f; overflow: hidden; display: flex; flex-direction: column;`;
const Sheet = styled.svg`position: absolute; left: 0; top: 0;`;
const ViewLabel = styled.div`
  display: flex; align-items: center; padding: 10px 0 0 28px; height: 42px; font-family: ${HUM}; font-size: 22.5px; letter-spacing: .9px; color: #a3a6aa; position: relative;
`;
const ViewName = styled.span``;
const Divider = styled.i`width: 2px; height: 23px; background: #8d9094; margin: 0 12px 0 ${p => p.$ml || 14}px;`;
const Command = styled.div`
  width: 1000px; height: 50px; margin: auto 0 0 519px; background: ${K}; display: flex; align-items: center; padding: 0 20px 1px 17px; position: relative;
  font-family: ${HUM}; font-size: 22px; font-style: italic; color: #9ea2a9;
  svg:first-child { margin-right: 29px; } span { flex: 1; margin-top: -2px; } svg:last-child { margin-left: 21px; }
`;

const gx = Array.from({ length: 31 }, (_, i) => ({ v: 430.2 + i * 67.43, m: i % 5 === 2 })).filter(g => g.v < 2405);
const gy = Array.from({ length: 22 }, (_, i) => ({ v: 178.5 + i * 67.5, m: i % 5 === 3 }));
const RED = "#e8301f";
const Arrow = ({ x, y, a }) => <path d="M0 0l-17-3.500v7z" fill={RED} transform={`translate(${x} ${y}) rotate(${a})`} />;
const D = ({ d, c = RED, w = 1.4 }) => <path d={d} stroke={c} strokeWidth={w} fill="none" />;
const Dt = ({ x, y, a = 0, children }) => (
  <text transform={`translate(${x} ${y}) rotate(${a}) scale(.94 1)`} y="8.500" fontSize="25" fontFamily={ART} fill={RED} textAnchor="middle">{children}</text>
);
const YL = "#e5e04b", GL = "#4d8a2f", WL = "#f2f2f2";
function Drawing() {
  return (
    <Sheet width="2038" height="1407" viewBox="367 150 2038 1407">
      {[...gx.filter(g => !g.m).map(g => [g.v, "x", "#282d36"]), ...gy.filter(g => !g.m).map(g => [g.v, "y", "#282d36"]), ...gx.filter(g => g.m).map(g => [g.v, "x", "#2f3743"]), ...gy.filter(g => g.m).map(g => [g.v, "y", "#2f3743"])]
        .map(([v, ax, c]) => <path key={ax + v} d={ax === "x" ? `M${v} 150v1407` : `M367 ${v}h2038`} stroke={c} strokeWidth="1.600" />)}
      <text x="867" y="411.500" fontSize="116" fontFamily={ART} fill="#fff" textLength="840" lengthAdjust="spacingAndGlyphs">ASSIGNMENT 4</text>
      <text x="578" y="731" fontSize="116" fontFamily={ART} fill="#fff" letterSpacing="-5.500">Q-1</text>
      <D c={WL} w={1.8} d="M1218.500 867.800H954.500V921.600H1150.600V1023.700H1434.800V867.800H1366.400V969.400H1218.500z" />
      <D c={WL} w={2} d="M1006.400 923.500L1106 921.600" />
      <D c={WL} w={1.8} d="M1056.500 1165.700H1434.800V1369.400H1056.500A102 101.850 0 0 1 1056.500 1165.700M1222.700 1165.700V1369.400M1364.500 1165.700V1369.400" />
      <circle cx="1056.500" cy="1267.500" r="44" stroke={WL} strokeWidth="1.700" fill="none" />
      <circle cx="1292.500" cy="1267.500" r="44" stroke={WL} strokeWidth="1.700" fill="none" />
      <D c={GL} w={1.8} d="M1006.400 855v33m0 21v33M1106.500 851v37m0 21v37M1242.400 959v23m0 19v23M1342.500 953v25m0 27v19M1150.600 1165.700v28.200m0 19v44.600m0 20v44m0 21.700v26" />
      <D c={YL} w={1.8} d="M1056.500 793v243M1292.500 901v197M917.800 1267.500h216.700M1175.800 1267.500h45M1262 1267.500h217M1056.500 1203v138.600M1292.500 1199v139" />
      <D d="M1218.500 819v45M1366.400 819v45M1218.500 829.400h148" /><Arrow x={1218.5} y={829.4} a={180} /><Arrow x={1366.4} y={829.4} a={0} />
      <D d="M920 867.800h17m3 0h2M920 921.600h17m3 0h2M928.400 868v53.600" /><Arrow x={928.4} y={868} a={-90} /><Arrow x={928.4} y={921.6} a={90} />
      <D d="M1438 867.800h37M1438 1023.700h37M1466.500 868v155.700" /><Arrow x={1466.5} y={868} a={-90} /><Arrow x={1466.5} y={1023.7} a={90} />
      <D d="M1352 969.400h15M1352 1023.700h15M1362 969.400v54" /><Arrow x={1362} y={969.4} a={-90} /><Arrow x={1362} y={1023.7} a={90} />
      <D d="M1150.600 1027v55M1434.800 1027v55M1150.600 1071.800h110.200M1282 1071.800h21M1324 1071.800h110.800" /><Arrow x={1150.6} y={1071.8} a={180} /><Arrow x={1434.8} y={1071.8} a={0} />
      <D d="M1056.500 1131v30M1434.800 1131v30M1056.500 1141h378.300" /><Arrow x={1056.5} y={1141} a={180} /><Arrow x={1434.8} y={1141} a={0} />
      <D d="M1438 1165.700h57M1438 1369.400h57M1486.200 1165.700v203.700" /><Arrow x={1486.2} y={1165.7} a={-90} /><Arrow x={1486.2} y={1369.4} a={90} />
      <D d="M912.700 1139.600L1056.500 1267.300L1114.300 1319.200M826.400 1189.400L1056.500 1267.300" />
      <Arrow x={1025.2} y={1238.5} a={41.7} /><Arrow x={1089} y={1297.6} a={221.7} /><Arrow x={960.5} y={1235.5} a={18.7} />
      <Dt x={1291.5} y={816.2}>22</Dt><Dt x={912.7} y={896.3} a={-90}>8</Dt><Dt x={1451.8} y={947} a={-90}>23</Dt><Dt x={1347} y={996.7} a={-90}>8</Dt>
      <Dt x={1291.5} y={1060.3}>42</Dt><Dt x={1243.3} y={1128}>56</Dt><Dt x={1470.6} y={1268.6} a={-90}>30</Dt>
      <Dt x={938.5} y={1147} a={41.7}>Ø13</Dt><Dt x={852} y={1185.7} a={18.7}>R15</Dt>
      <D c="#e3e5e6" w={1.8} d="M402.500 1419V1519.500H502.500M394 1509.500h19v18h-19zM406 1385l12.500 13.500v12M431 1385l-12.500 13.500M512 1491l25 25M537 1491l-25 25" />
      <circle cx="2242.500" cy="314.500" r="107" stroke="#44494e" strokeWidth="28" fill="none" />
      <rect x="2192" y="264" width="101" height="101" fill="#b1b3b6" />
      <rect x="2211" y="283" width="63" height="63" fill="#a3a6ac" />
      <text x="2242.500" y="323" fontSize="23" fontWeight="700" fontFamily={ART} fill="#50555e" textAnchor="middle" textLength="43" lengthAdjust="spacingAndGlyphs">TOP</text>
      {[["N", 2242.5, 219], ["S", 2242.5, 440], ["W", 2130, 329], ["E", 2354, 329]].map(([t, x, y]) => <text key={t} x={x} y={y} fontSize="42" fontWeight="700" fontFamily={ART} fill="#b5b8bb" textAnchor="middle">{t}</text>)}
      <rect x="2194" y="489" width="99" height="24" rx="8" fill="#696d72" stroke="#7e8286" strokeWidth="1.500" />
      <text x="2226" y="509" fontSize="21" fontWeight="700" fontFamily={ART} fill="#c9cbce" textAnchor="middle" textLength="47" lengthAdjust="spacingAndGlyphs">WCS</text>
      <path d="M2268 496h15l-7.500 10z" stroke="#c9cbce" strokeWidth="1.600" fill="none" />
    </Sheet>
  );
}
const TABS = ["Assignment 1 Q-4", "ASSIGNMENT 2 1", "ASSIGNMENT 2 2", "ASSIGNMENT 2 4*", "ASSIGNMENT 2 3", "ASSIGNMENT 3 2"];
const Chevron = ({ flip, w = 10, h = 18, c = "#a5a9b0", sw = 1.8 }) => <svg width={w} height={h} viewBox="0 0 10 18" preserveAspectRatio="none"><path d={flip ? "M1 1l8 8-8 8" : "M9 1L1 9l8 8"} stroke={c} strokeWidth={sw} fill="none" /></svg>;

/* ---------- right inspector ---------- */
const Right = styled.aside`flex: 1; display: flex; flex-direction: column; min-width: 0; background: ${K};`;
const RightTabs = styled.div`height: 46px; flex: none; display: flex;`;
const RightTab = styled.div`
  width: ${p => p.$w}px; display: flex; align-items: center; justify-content: center; position: relative; padding-top: ${p => p.$pt || 0}px;
  ${p => !p.$on && css`background: ${p.$plain ? K : "#2f323e"}; border: solid #252a34; border-width: 0 0 2px 2px;`}
`;
const PanelHead = styled.div`
  display: flex; align-items: center; height: 32px; padding: 0 ${p => p.$pr ?? 20}px 0 20px; font-size: 23px; font-weight: 500; letter-spacing: ${p => p.$ls || 0}px; color: #e4e6e8;
  h2 { font: inherit; margin: 0; flex: 1; }
`;
const LayerTools = styled.div`display: flex; gap: 16px; padding: 0 0 0 28px; height: 32px; margin-top: 33px;`;
const Select = styled.div`
  height: ${p => p.$h || 37}px; width: ${p => p.$w}px; flex: none; border: 2px solid ${p => (p.$off ? "#3f4755" : "#333d43")}; border-radius: 5px;
  background: ${p => (p.$off ? "#434b5b" : "#50596c")}; color: ${p => (p.$off ? "#7b818d" : "#f3f4f5")};
  display: flex; align-items: center; padding: 0 ${p => p.$pr ?? 8}px 1px ${p => p.$pl ?? 12}px; font-size: ${p => p.$fs || 20}px; font-weight: 500; letter-spacing: ${p => p.$ls ?? 0.6}px;
  span { flex: 1; text-align: ${p => p.$align || "left"}; }
`;
const LayerStack = styled.div`display: flex; flex-direction: column; gap: 4px; padding: 22px 0 0 19px;`;
const StateRow = styled.div`padding-left: 1px;`;
const Swatch = styled.i`width: 18px; height: 18px; background: #ee4023; border: 2px solid #0c0c0c; flex: none; margin: ${p => p.$m || 0};`;
const ShowList = styled.div`display: flex; align-items: center; gap: 25px; padding: 0 0 2px 33px; height: 52px; font-size: 21px; letter-spacing: .5px; color: #c3c7cd;`;
const Rule = styled.div`height: 2px; background: #242a33; margin-top: 19px;`;
const Toggle = styled.div`
  display: flex; border: 2px solid #2b313c; height: 28px; width: 120px; margin-right: 20px; font-size: 17px; letter-spacing: .3px;
  b { flex: 1; display: flex; align-items: center; justify-content: center; font-weight: 500; color: #7d838d; }
  b + b { background: #50596c; color: #f0f1f3; border-left: 2px solid #2b313c; }
`;
const Props = styled.div`display: grid; grid-template-columns: 154px 226px; row-gap: 9px; padding: 13px 0 0 66px;`;
const Label = styled.div`
  height: 37px; display: flex; align-items: center; padding: 0 21px 1px 0; justify-content: ${p => (p.$long ? "flex-start" : "flex-end")};
  font-size: 20px; letter-spacing: .72px; color: #cdd0d5; white-space: pre; -webkit-text-stroke: .25px #cdd0d5;
`;
const Pair = styled.div`display: flex; justify-content: space-between; align-items: center;`;
const Slider = styled.div`
  width: 136px; height: 33px; margin-left: 5px; border: 2px solid #333d43; background: #50596c; display: flex; align-items: center; justify-content: space-between;
  padding: 0 5px; font-size: 21px; color: #f3f4f5; font-weight: 500;
`;
const MiniBtn = styled.div`
  width: ${p => p.$w}px; height: 37px; border: 2px solid #333d43; border-radius: 4px; display: flex; align-items: center; justify-content: space-evenly; background: ${p => p.$bg || K};
`;
const Gap = styled.i`width: ${p => p.$w ?? 13}px; flex: none;`;
const ModelRow = styled.div`padding: 15px 0 0 21px;`;
const DockIcon = () => <svg width="23" height="28" viewBox="0 0 23 28"><path d="M9 7V1h13v26H9v-6" stroke="#e6e7e9" strokeWidth="2.200" fill="none" /><path d="M9 3h13" stroke="#e6e7e9" strokeWidth="4" /><path d="M4 14h9" stroke="#e6e7e9" strokeWidth="2.200" /><path d="M0 14l6-4.500v9z" fill="#e6e7e9" /></svg>;

const ROWS = [
  ["Color", "ByLayer", "color"], ["Layer", "Layer1"], ["Linetype", "ByLayer", "line"], ["Linetype sc...", "1", "input"], ["Lineweight", "ByLayer"],
  ["Transparency", "0", "slider"], ["Text style", "Standard"], ["Dimension s...", "ISO-25"], ["Multileader...", "Standard"], ["Table style", "Standard"],
  ["Annotation s...", "1:1"], ["Text height", "2.5", "height"], ["Plot style", "ByColor"], ["Plot style ta...", "None"], ["Plot style at...", "Model", "off"], ["Plot table ty...", "Not available", "off"],
];
function Control({ v, kind }) {
  if (kind === "slider") return (
    <Pair>
      <Slider><svg width="62" height="22" viewBox="0 0 62 22"><path d="M-5 0v5l3-5zM-5 22v-5l3 5z" fill="#6f97d8" /><path d="M59 13v9" stroke="#9da2ac" strokeWidth="1.200" /></svg>{v}</Slider>
      <MiniBtn $w={77} $bg="#50596c"><svg width="26" height="18" viewBox="0 0 26 18"><path d="M9 0h16l-7 8H0z" fill={B} /><path d="M0 12h17l8-7M0 16.500h17l8-7" stroke={G} strokeWidth="2.400" fill="none" /></svg><Caret w={12} h={8} /></MiniBtn>
    </Pair>
  );
  if (kind === "height") return (
    <Pair><Select $w={182} $pl={6}><span>{v}</span></Select>
      <MiniBtn $w={40}><svg width="32" height="32" viewBox="0 0 32 32"><path d="M1 0v28M29 0v11" stroke={G} strokeWidth="2" /><path d="M6 5h18" stroke={B} strokeWidth="2" /><path d="M4 5l5-4v8zM26 5l-5-4v8z" fill={B} /><path d="M23 15v17M14 23h18M18 19h10v8H18z" stroke={G} strokeWidth="2" fill="none" /></svg></MiniBtn>
    </Pair>
  );
  if (kind === "input") return <Select $w={226} $pl={6}><span>{v}</span></Select>;
  if (kind === "off") return <Select $w={226} $pl={6} $off><span>{v}</span></Select>;
  return (
    <Select $w={226} $align={kind === "line" ? "right" : "left"}>
      {kind === "color" && <Swatch $m="0 22px 0 4px" />}
      {kind === "line" && <svg width="65" height="2" viewBox="0 0 65 2"><path d="M0 1h65" stroke="#f3f4f5" strokeWidth="2" /></svg>}
      <span>{v}</span><Gap /><Caret w={12} h={8} />
    </Select>
  );
}

function RightPanel() {
  return (
    <Right>
      <RightTabs>
        <RightTab $w={103} $on><svg width="32" height="30" viewBox="0 0 32 30"><g transform="translate(-2 0)"><Sheets /></g><circle cx="25" cy="21" r="8" fill={K} /><circle cx="25" cy="21" r="7" fill={G} /><path d="M25 19v7M25 15v2.500" stroke={K} strokeWidth="2.200" /></svg></RightTab>
        <RightTab $w={106}><svg width="31" height="30" viewBox="0 0 31 30"><path d="M0 8h21v6h9v15H0z" fill={G} /><path d="M24 7l6 5h-6z" fill={W} /><rect x="-1" y="0" width="13" height="20" fill="#2f323e" /><path d="M7 6v7h3V6a4.500 4.500 0 0 0-9 0v7a4.500 4.500 0 0 0 7 4" stroke={G} strokeWidth="2" fill="none" /></svg></RightTab>
        <RightTab $w={105} $pt={4}><svg width="27" height="27" viewBox="0 0 27 27"><path d="M0 0h27v27H0z" fill={G} /><path d="M0 0h27v5H0z" fill="#9b9ea3" /><path d="M2 2h3v2H2z" fill="#333" /><path d="M4 8h5v5H4zM11 8h5v5h-5zM18 8h5v5h-5zM4 15h5v5H4zM11 15h5v5h-5zM18 15h5v5h-5z" fill="#4c5059" /><path d="M4 24h19" stroke="#8b8e93" strokeWidth="2" /></svg><Badge $x={56} $y={-2} /></RightTab>
        <RightTab $w={110} />
        <RightTab $w={49} $plain><svg width="14" height="11" viewBox="0 0 14 11"><path d="M1 0l5 5.500L1 11M8 0l5 5.500L8 11" stroke="#b5b8be" strokeWidth="1.500" fill="none" /></svg></RightTab>
      </RightTabs>
      <PanelHead $pr={22}><h2>Layers</h2><DockIcon /></PanelHead>
      <LayerTools>{["lyState", "lyMatch", "lyPrev", "lyCurrent", "lyMove", "lyFreeze", "lyOff", "lyLock", "lyUnlock"].map(n => <Icon key={n} n={n} />)}</LayerTools>
      <LayerStack>
        <Select $w={438} $h={52} $pl={19} $fs={21} $pr={7} $ls={0.4}>
          <svg width="86" height="22" viewBox="0 0 86 22"><circle cx="8" cy="11" r="8" fill="#dcdddf" /><g opacity=".22"><LockShape x={36} y={2} c="#fff" /><Snow x={76} y={11} c="#fff" /></g></svg>
          <Swatch $m="0 24px 0 14px" /><span>Layer1</span><Caret w={12} h={8} />
        </Select>
        <StateRow><Select $w={436} $h={52} $fs={21} $pr={7} $ls={0.5}><span>Unsaved Layer State</span><Caret w={12} h={8} /></Select></StateRow>
      </LayerStack>
      <ShowList><Chevron flip w={10} h={16} c="#c3c7cd" sw={2.6} />Show Layer List</ShowList>
      <Rule />
      <PanelHead $ls={0.25}><h2>Properties</h2><Toggle><b>All</b><b>My</b></Toggle>
        <svg width="29" height="28" viewBox="0 0 29 28"><path d="M19 10V1H1v23h9" stroke="#e6e7e9" strokeWidth="2.200" fill="none" /><path d="M0 2h20" stroke="#e6e7e9" strokeWidth="4" /><path d="M5 9h10M5 14h9M5 19h6" stroke="#e6e7e9" strokeWidth="2" /><path d="M12 23l9-10 6 5-9 9-6 1z" fill="#e6e7e9" /></svg><Gap $w={20} /><DockIcon />
      </PanelHead>
      <ModelRow><Select $w={430} $h={42} $off $fs={21} $pr={7} $pl={11}><span>Model Space</span><Caret w={12} h={8} c="#7b818d" /></Select></ModelRow>
      <Props>
        {ROWS.map(([l, v, k]) => [<Label key={l} $long={l.includes("...") || l === "Transparency"}>{l}</Label>, <Control key={l + "v"} v={v} kind={k} />])}
      </Props>
    </Right>
  );
}

/* ---------- status bar ---------- */
const Status = styled.footer`height: 36px; flex: none; display: flex; background: linear-gradient(#3c4452, #383e4b);`;
const LayoutTab = styled.div`
  width: ${p => p.$w}px; display: flex; align-items: center; justify-content: center; border-right: 2px solid #262c36; font-family: ${HUM}; font-size: 22px; padding: 3px 2px 0 0;
  color: ${p => (p.$on ? "#f1f2f4" : "#a2a6ad")}; font-weight: ${p => (p.$on ? 600 : 400)}; background: ${p => (p.$on ? "#4d576b" : "transparent")};
  svg { margin-top: 4px; }
`;
const Coords = styled.div`
  margin-left: auto; border-left: 2px solid #262c36; width: 341px; padding: 8px 0 0 5px; font-size: 22px; color: #b2b5bb; white-space: nowrap; letter-spacing: .2px;
`;
const StatusBtns = styled.div`display: flex; gap: 4px; width: 722px; padding-top: 2px; > svg { margin-left: 14px; }`;
const StatusBtn = styled.div`width: 40px; height: 40px; flex: none; background: ${p => (p.$on ? "#6487b5" : "transparent")}; display: flex; align-items: flex-start; justify-content: center; padding-top: 4px;`;
const st = { stroke: "#f3f4f5", strokeWidth: 2, fill: "none" };
const STATUS = [
  [1, <path key="a" d="M7 0v36M16 0v36M25 0v36M0 8h32M0 17h32M0 26h32" {...st} />],
  [0, <g key="a" fill={G}>{[4, 15, 26].flatMap(x => [6, 16, 26].map(y => <rect key={x + "." + y} x={x - 2} y={y - 1} width="4" height="4" />))}</g>],
  [0, <path key="a" d="M2 0v34M2 21h10v12" {...st} stroke={G} />],
  [1, <g key="a" {...st}><circle cx="14" cy="18" r="12" /><path d="M32 16H13L28 2" /></g>],
  [1, <g key="a"><path d="M8 3v14M1 10h14" {...st} /><rect x="14" y="20" width="18" height="8" stroke="#fff" strokeWidth="2" fill="none" /><rect x="18" y="22" width="12" height="5" fill="#fff" /></g>],
  [0, <g key="a" fill={G}><path d="M0 3h32v2H16v2H0zM0 11h32v2H16v4H0zM0 21h32v2H16v6H0z" /></g>],
  [1, <g key="a"><rect x="2" y="2" width="28" height="30" {...st} />{[0, 1, 2, 3, 4].flatMap(r => [0, 1, 2, 3, 4].map(c => (r + c) % 2 ? null : <rect key={r + "-" + c} x={5 + c * 4.5} y={6 + r * 4.5} width="4.500" height="4.500" fill="#fff" />))}</g>],
  [1, <g key="a"><path d="M8 1H2v30h6M24 1h6v12M10 5h10v6H10z" {...st} /><circle cx="14" cy="20" r="4.500" {...st} strokeWidth="3" /><path d="M21 14v18l4-3h7z" fill="#fff" /></g>],
  [1, <g key="a"><path d="M28 4L2 28h30" {...st} /><rect x="12" y="11" width="7" height="7" fill="#fff" /></g>],
  [1, <path key="a" d="M3 0v32h28V0" {...st} />],
  [1, <path key="a" d="M4 30l7-12q5-4 10 0l7 12" {...st} strokeWidth="6" />],
  [0, <path key="a" d="M4 30l7-12q5-4 10 0l7 12" {...st} stroke={G} strokeWidth="6" />],
  [0, <path key="a" d="M6 30l7-12q5-4 10 0l7 12" {...st} stroke={G} strokeWidth="6" />],
  [0, <path key="a" d="M-2 15v8h4M16 15v8M7 18h2" {...st} stroke={G} />],
  [0, <g key="a"><path d="M-16 15l4 6 4-6z" fill={G} /><path d="M19 30l7-11 7 11M33 13q6 8 10-1" {...st} stroke={G} /></g>],
];

/* ---------- floating preview ---------- */
const Preview = styled.div`position: absolute; left: 2552px; top: 1385px; width: 304px; height: 196px; background: #030303; border-radius: 8px; padding: 8px; box-shadow: 0 0 6px rgba(0,0,0,.5);`;
const DOCK = ["#e9eef5", "#a48f86", "#3f7fd6", "#56c466", "#4a90e2", "#d9e6d0", "#e7e2dc", "#4fc26b", "#f0efee", "#9b7142", "#f4f2ef", "#f3e8b9", "#17181b", "#e5384d", "#a24bd4", "#2f86ea", "#8b8d92", "#b3202c"];
const Bar = ({ x, y, w, h = 3, c = "#9fa4ad" }) => <rect x={x} y={y} width={w} height={h} fill={c} opacity=".8" />;
const MINI_BIG = [["line", "polyline", "circle", "rect"], ["hatch", "hatchPaste", "gradient", "boundary"], ["blockNew", "blockInsert", "blockEdit", "tagEdit"], ["move", "copy", "trim", "array"], ["mtext", "textStyle", "spell", "astyle"], ["dim", "dimStyle", "dimLin", "dimSpace"], ["leader", "leaderStyle", "leaderAdd", "leaderAlign"], ["table", "tableStyle", "linkProps", "linkDown"], ["redLine", "autoConstrain", "dimLock", "dimConv"]];
const MINI_ROWS = { 0: SECTIONS[0][2], 2: SECTIONS[2][2], 3: SECTIONS[3][2] };
const BIG = new Set("line polyline circle rect hatch hatchPaste gradient blockNew blockInsert blockEdit tagEdit move trim mtext textStyle dim dimStyle leader leaderStyle table tableStyle redLine dimLock".split(" "));
function PreviewShot() {
  return (
    <svg width="288" height="180" viewBox="600 69 864 540">
      <rect x="600" y="69" width="864" height="540" fill="#3c4452" />
      <defs><linearGradient id="wall" x1="0" x2="1"><stop offset="0" stopColor="#120b33" /><stop offset=".6" stopColor="#4a1a6b" /><stop offset="1" stopColor="#150a3a" /></linearGradient></defs>
      <rect x="600" y="69" width="864" height="14" fill="#33109a" />
      {[632, 703, 728, 753, 784, 817, 855, 886, 917, 970, 1008, 1046].map((x, i) => <Bar key={x} x={x} y={75} w={i ? 16 : 58} c="#dcd3f5" />)}
      <Bar x={1376} y={75} w={76} c="#dcd3f5" />
      {["#e8675c", "#f3bf4f", "#61c454"].map((c, i) => <circle key={c} cx={608 + i * 12} cy="92" r="3.500" fill={c} />)}
      <Bar x={942} y={90} w={190} />
      {[716, 736, 756, 776, 818, 838, 880, 900, 920, 938, 981, 1000, 1020, 1040, 1082, 1102, 1122, 1163, 1184, 1204, 1224, 1244, 1264, 1304, 1326, 1346].map(x => <circle key={x} cx={x} cy="107" r="4" fill="#d5d7da" />)}
      <rect x="710" y="118" width="614" height="14" fill="#3a4250" /><rect x="1140" y="118" width="74" height="13" fill="#50596d" />
      {[753, 830, 908, 986, 1062, 1142, 1218].map(x => <Bar key={x} x={x} y={124} w={54} />)}
      <rect x="709" y="132" width="613" height="422" fill="#22282f" />
      {[760, 811, 862, 913, 964, 1015, 1066, 1117, 1168, 1219, 1270].map(x => <path key={x} d={`M${x} 132v422`} stroke="#282f38" />)}
      {[175, 226, 277, 328, 379, 430, 481, 532].map(y => <path key={y} d={`M709 ${y}h613`} stroke="#282f38" />)}
      <Bar x={610} y={124} w={26} c="#fff" /><Bar x={655} y={124} w={32} />
      {[138, 195, 238, 296, 353, 397, 440, 484, 526].map((y, i) => (
        <g key={y}><Bar x={606} y={y - 1} w={18} c="#fff" /><rect x="702" y={y - 2} width="4" height="4" fill="#fff" />
          {MINI_BIG[i].map((n, k) => <g key={n} transform={`translate(${606 + k * 26.4} ${y + 11}) scale(${BIG.has(n) ? 0.3 : 0.6})`}>{ICONS[n]}</g>)}
          {MINI_ROWS[i] && MINI_ROWS[i].replace(/>/g, "").split(" ").map((n, k) => <g key={n} transform={`translate(${604 + k * 13.2} ${y + 36}) scale(.34)`}>{ICONS[n]}</g>)}
        </g>
      ))}
      <circle cx="1272" cy="181" r="31" stroke="#565b60" strokeWidth="9" fill="none" /><rect x="1257" y="166" width="31" height="31" fill="#c9cbcd" />
      {[["N", 1272, 153], ["S", 1272, 220], ["W", 1239, 186], ["E", 1306, 186]].map(([t, x, y]) => <text key={t} x={x} y={y} fontSize="13" fontWeight="700" fontFamily={ART} fill="#c4c6c8" textAnchor="middle">{t}</text>)}
      <Bar x={1257} y={235} w={32} h={5} />
      <text x="825" y="312" fontSize="24" fontFamily={ART} fill="#fff">Q-2</text>
      <g strokeWidth="1.500" fill="none">
        <path d="M902 486V408q6-29 36-29h212M912 486V388h238M902 414h250M912 440h240M962 450h190M938 378v108M962 388v98M974 400v86" stroke="#8d9092" strokeDasharray="9 5" />
        <path d="M903 440V408q6-27 33-28 34 4 38 34v30" stroke="#8a4038" />
        <path d="M914 390l50 50M964 390l-50 50" stroke="#a7aaac" />
        <path d="M1070 366v105M1078 380v96M1100 368v118M1122 380v117M1132 370v134M1070 466l62 36" stroke="#9aa13c" strokeDasharray="8 4" />
        <path d="M722 502v41h31" stroke="#a9acb0" />
      </g>
      {[902, 912, 938, 963, 973].map(x => <path key={x} d={`M${x - 4} 481l8 8M${x + 4} 481l-8 8`} stroke="#5aa02c" strokeWidth="2" />)}
      {[[1078, 389], [1100, 378], [1122, 389], [1070, 414], [1132, 414], [1078, 440], [1122, 440], [1100, 450], [1070, 467], [1078, 472], [1100, 486], [1122, 497], [1132, 503]].map(([x, y]) => <path key={x + "," + y} d={`M${x - 4} ${y - 4}l8 8M${x + 4} ${y - 4}l-8 8`} stroke="#7fae3a" strokeWidth="1.800" />)}
      {[1338, 1369, 1400].map(x => <rect key={x} x={x - 4} y="120" width="9" height="9" fill="#d5d7da" />)}<circle cx="1403" cy="120" r="3" fill={O} />
      <Bar x={1329} y={136} w={20} c="#fff" />{[1334, 1348, 1363, 1378, 1392, 1406, 1421, 1436, 1450].map(x => <path key={x} d={`M${x - 1} 151h6l-3 4h2v5h-6v-3h-3z`} fill="#d5d7da" />)}
      <rect x="1329" y="168" width="129" height="14" fill="#50596c" /><rect x="1329" y="185" width="127" height="14" fill="#50596c" /><Bar x={1332} y={191} w={62} c="#fff" /><Bar x={1376} y={174} w={22} c="#fff" />
      <Bar x={1342} y={206} w={46} /><Bar x={1329} y={225} w={36} c="#fff" />
      {Array.from({ length: 16 }, (_, i) => <g key={i}><rect x="1389" y={253.5 + i * 13.8} width="66" height="10" fill={i > 13 ? "#434b5b" : "#50596c"} /><Bar x={1354} y={257 + i * 13.8} w={29} /><Bar x={1392} y={257 + i * 13.8} w={26} c={i > 13 ? "#777" : "#fff"} /></g>)}
      <rect x="1367" y="502" width="90" height="57" rx="3" fill="#0a0a0a" /><rect x="1371" y="506" width="82" height="50" fill="#333b48" /><rect x="1381" y="514" width="60" height="34" fill="#22282f" />
      <rect x="864" y="539" width="302" height="13" fill="#3c4452" /><Bar x={892} y={545} w={56} />
      <Bar x={717} y={560} w={20} c="#fff" /><Bar x={765} y={560} w={60} />
      <Bar x={1146} y={560} w={90} />{[1252, 1291, 1304, 1330, 1343, 1356].map(x => <rect key={x} x={x - 5} y="556" width="11" height="11" fill="#6487b5" />)}
      <rect x="600" y="568" width="864" height="41" fill="url(#wall)" /><rect x="622" y="571" width="822" height="33" rx="6" fill="#5b2a7d" opacity=".55" />
      {DOCK.map((c, i) => <rect key={c} x={629 + i * 30.2} y="574" width="25" height="25" rx="6" fill={c} />)}
      {["#191a1d", "#f2683c", "#d7d9ea", "#4e8fd0", "#2b2c33", "#f1f1f3", "#f1f1f3", "#85898e"].map((c, i) => <rect key={i} x={[1185, 1216, 1246, 1289, 1319, 1350, 1381, 1413][i]} y={i > 3 && i < 7 ? 578 : 574} width={i === 7 ? 18 : 25} height={i > 3 && i < 7 ? 17 : 26} rx={i > 3 ? 1 : 6} fill={c} />)}
      <rect x="601.500" y="70.500" width="861" height="537" fill="none" stroke="#fff" strokeWidth="3" />
    </svg>
  );
}

const TOOLS = [["new", "open*", "save", "saveAs"], ["undo", "redo"], ["print", "batch*", "pageSetup", "pageEdit"], ["import", "export", "attach", "web"], ["zoomWin", "pan", "orbit"], ["props", "quick", "count", "convert", "purge", "geo*"], ["compare", "share*", "activity*"]];

export default function App() {
  return (
    <>
      <Global />
      <Window>
        <Header>
          <TitleBar>
            <Lights><Light $c="#ec6a5f" /><Light $c="#f4bf50" /><Light $c="#61c454" /></Lights>
            <Title>
              <svg width="28" height="32" viewBox="0 0 28 32"><path d="M0 0h20l8 9v23H0z" fill="#3f639f" /><path d="M20 0l8 9h-8z" fill="#8ba4cc" /><path d="M0 18h8l20 13v1H0z" fill="#efb94a" /><path d="M9 0v18M0 11h28" stroke="#d9e6f7" strokeWidth="2" /><rect x="6" y="8" width="6" height="6" fill="#3f639f" stroke="#d9e6f7" strokeWidth="2" /></svg>
              <TitleText $ls={1.2}>Autodesk AutoCAD 2023</TitleText><TitleText $ls={1.3}>Assignment 4 Q-1.dwg</TitleText>
            </Title>
            <User>
              <svg width="24" height="26" viewBox="0 0 24 26"><circle cx="12" cy="5" r="5.500" stroke="#d6d8db" strokeWidth="2" fill="none" /><path d="M1 26c0-17 22-17 22 0" stroke="#d6d8db" strokeWidth="2" fill="none" /></svg>
              <span>Ayush Gupta</span><Caret w={12} h={9} />
            </User>
          </TitleBar>
          <Toolbar>
            {TOOLS.map((g, i) => (
              <ToolGroup key={i}>{g.map(t => { const n = t.replace("*", ""); return <ToolBtn key={n}><Icon n={n} />{t !== n && <Badge $x={44} $y={12} />}</ToolBtn>; })}</ToolGroup>
            ))}
          </Toolbar>
        </Header>
        <Body>
          <LeftPanel />
          <Main>
            <Upper>
              <Center>
                <FileTabs>
                  <FileTab $w={48} $icon><svg width="28" height="28" viewBox="0 0 28 28"><rect width="14" height="14" fill={B} /><rect x="16" y="2" width="12" height="12" fill={G} /><rect x="2" y="16" width="12" height="12" fill={G} /><rect x="16" y="16" width="12" height="12" fill={G} /></svg></FileTab>
                  <FileTab $w={46} $icon><svg width="22" height="22" viewBox="0 0 22 22"><path d="M11 0v22M0 11h22" stroke={G} strokeWidth="1.600" /></svg></FileTab>
                  <FileTab $w={45} />
                  {TABS.map((t, i) => <FileTab key={t} $ls={i ? 0.1 : 0.2}>{t}</FileTab>)}
                  <FileTab $on $ls={0.1}>Assignment 4 Q-1<svg width="12" height="12" viewBox="0 0 12 12"><path d="M1 1l10 10M11 1L1 11" stroke="#b9bdc5" strokeWidth="1.500" /></svg></FileTab>
                  <FileTab $w={48} $icon><Chevron /></FileTab>
                  <FileTab $w={46} $icon><Chevron flip /></FileTab>
                </FileTabs>
                <Canvas>
                  <Drawing />
                  <ViewLabel><ViewName>+</ViewName><Divider $ml={24} /><ViewName>Top</ViewName><Divider $ml={15} /><ViewName>2D Wireframe</ViewName></ViewLabel>
                  <Command>
                    <svg width="44" height="20" viewBox="0 0 44 20"><path d="M1 1l8 5-8 5" stroke="#c3c6cb" strokeWidth="2.200" fill="none" /><path d="M14 17h13" stroke="#c3c6cb" strokeWidth="2.200" /><path d="M32 4h11l-5.500 8z" fill="#a7abb1" /></svg>
                    <span>Type a command</span><Caret w={12} h={8} c="#9b9fa6" up />
                    <svg width="28" height="28" viewBox="0 0 28 28"><path d="M9 10H2v16h23V10h-7M7 10v16" stroke={G} strokeWidth="2" fill="none" /><path d="M14 5v14" stroke={B} strokeWidth="2" /><path d="M14 0l5 7H9z" fill={B} /></svg>
                  </Command>
                </Canvas>
              </Center>
              <RightPanel />
            </Upper>
            <Status>
              <LayoutTab $w={120} $on>Model</LayoutTab>
              <LayoutTab $w={46}><svg width="22" height="22" viewBox="0 0 22 22"><path d="M11 0v22M0 11h22" stroke={G} strokeWidth="1.600" /></svg></LayoutTab>
              <LayoutTab $w={118}>Layout1</LayoutTab><LayoutTab $w={118}>Layout2</LayoutTab>
              <Coords>1634.4404, 1220.8909, 0.0000</Coords>
              <StatusBtns>
                {STATUS.map(([on, g], i) => <StatusBtn key={i} $on={on}><svg width="32" height="36" viewBox="0 0 32 36">{g}</svg></StatusBtn>)}
                <Gear s={34} c={G} bg="#3a4150" />
              </StatusBtns>
            </Status>
          </Main>
        </Body>
        <Preview><PreviewShot /></Preview>
      </Window>
    </>
  );
}
